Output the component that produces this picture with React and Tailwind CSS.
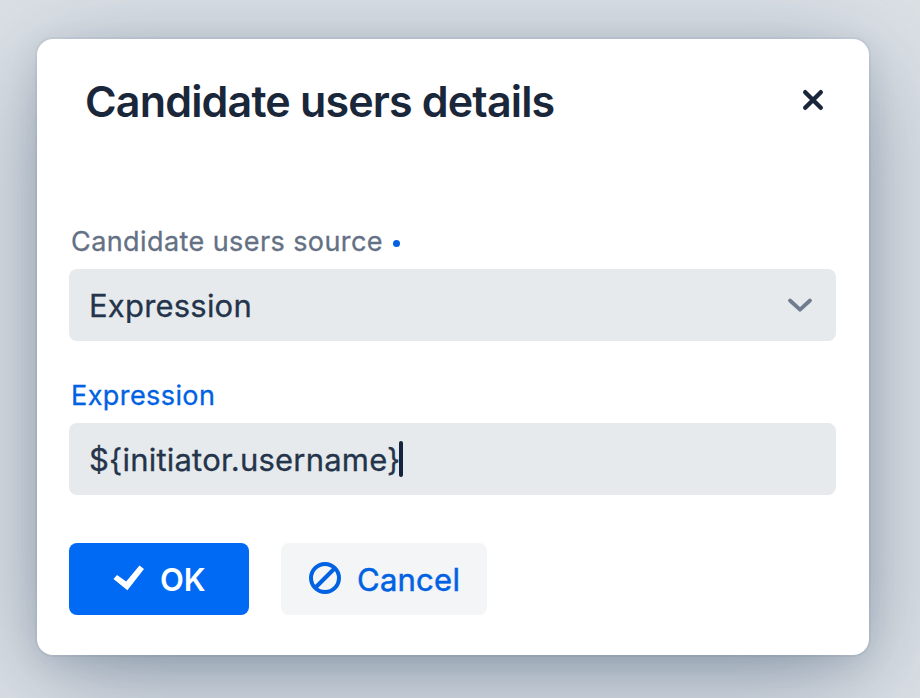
function CloseIcon() {
  return (
    <svg className="size-6" viewBox="0 0 24 24" fill="none" stroke="currentColor" strokeWidth="4.4" strokeLinecap="round">
      <path d="M4.2 4.2 19.8 19.8M19.8 4.2 4.2 19.8" />
    </svg>
  );
}

function ChevronIcon() {
  return (
    <svg className="h-4 w-7" viewBox="0 0 28 16" fill="none" stroke="#6f7c8d" strokeWidth="3.8" strokeLinecap="round" strokeLinejoin="round">
      <path d="M4 3.5 14 12.7 24 3.5" />
    </svg>
  );
}

function CheckIcon() {
  return (
    <svg className="mb-0.5 h-[26px] w-[31px]" viewBox="0 0 31 26" fill="currentColor">
      <path d="M0.5 14 4 10 13.2 16.6 26.5 0.5 31 4 14.4 25.2Z" />
    </svg>
  );
}

function BanIcon() {
  return (
    <svg className="mb-0.5 size-8" viewBox="0 0 32 32" fill="none" stroke="currentColor" strokeWidth="4">
      <circle cx="16" cy="16" r="14" />
      <path d="M6.5 25.5 25.5 6.5" />
    </svg>
  );
}

export default function App() {
  return (
    <div className="h-[698px] w-[920px] overflow-hidden bg-[#dce1e6] pt-[39px] pl-[37px] font-['Inter','Liberation_Sans',sans-serif]">
      <div
        role="dialog"
        className="flex h-[616px] w-[832px] flex-col rounded-2xl bg-white px-8 shadow-[0_0_0_2px_rgba(26,57,96,0.05),0_8px_32px_-6px_rgba(30,60,90,0.17),0_24px_108px_-6px_rgba(30,56,90,0.43)]"
      >
        <header className="flex h-[122px] items-center justify-between pr-3 pl-4">
          <h2 className="pt-0.5 text-[43px] leading-[52px] font-semibold tracking-[-0.84px] whitespace-nowrap text-[#1a2639]">
            Candidate users details
          </h2>
          <button className="text-[#1a2639]" aria-label="Close">
            <CloseIcon />
          </button>
        </header>

        <label className="mt-[62px] flex h-[38px] items-center pl-0.5 text-[27px] font-normal tracking-[0.42px] whitespace-nowrap text-[#647184] [-webkit-text-stroke:0.3px_currentColor]">
          <span>Candidate users source</span>
          <span className="mt-0.5 ml-2.5 size-[7px] rounded-full bg-[#0062e3]" />
        </label>
        <div className="mt-2 flex h-[72px] w-[767px] shrink-0 items-center justify-between rounded-lg bg-[#e7eaed] pr-[22px] pl-5 text-[#24344a]">
          <span className="pt-0.5 text-[31px] font-normal tracking-[0.2px] [-webkit-text-stroke:0.3px_currentColor]">Expression</span>
          <ChevronIcon />
        </div>

        <label className="mt-9 flex h-[38px] items-center pl-0.5 text-[27px] font-normal tracking-[0.42px] text-[#0062e3] [-webkit-text-stroke:0.3px_currentColor]">Expression</label>
        <div className="mt-2 flex h-[72px] w-[767px] shrink-0 items-center rounded-lg bg-[#e7eaed] pl-5 text-[#24344a]">
          <span className="pt-0.5 text-[31px] font-normal tracking-[0.2px] whitespace-nowrap [-webkit-text-stroke:0.3px_currentColor]">{'${initiator.username}'}</span>
          <span className="-ml-0.5 h-9 w-1 rounded-sm bg-[#14243c]" />
        </div>

        <div className="mt-12 flex gap-8 text-[31px]">
          <button className="flex h-[72px] w-[180px] items-center gap-4 rounded-lg bg-[#006af5] pl-11 font-semibold text-white">
            <CheckIcon />
            <span className="pt-0.5">OK</span>
          </button>
          <button className="flex h-[72px] w-[206px] items-center gap-4 rounded-lg bg-[#f3f5f7] pl-7 font-normal text-[#0062e3]">
            <BanIcon />
            <span className="pt-0.5 tracking-[0.25px] [-webkit-text-stroke:0.5px_currentColor]">Cancel</span>
          </button>
        </div>
      </div>
    </div>
  );
}
